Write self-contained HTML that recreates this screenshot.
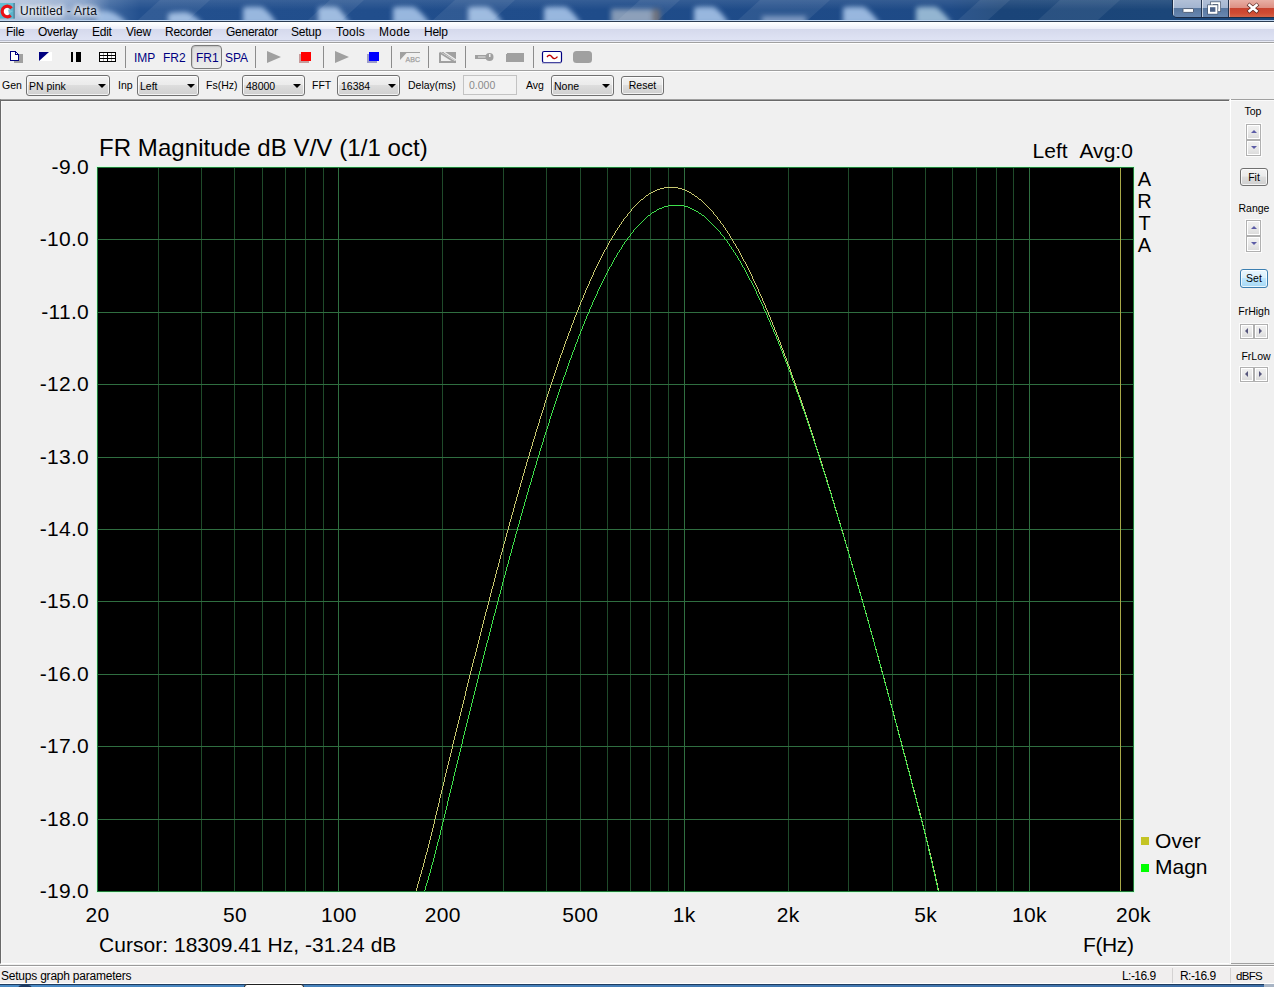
<!DOCTYPE html>
<html><head><meta charset="utf-8"><title>Untitled - Arta</title>
<style>
*{box-sizing:border-box;margin:0;padding:0}
html,body{width:1274px;height:987px;overflow:hidden;background:#f0f0f0}
body{position:relative;font-family:"Liberation Sans",sans-serif;font-size:12px;color:#000}
.abs{position:absolute}
.t{position:absolute;white-space:nowrap;line-height:1}
/* title bar */
#title{position:absolute;left:0;top:0;width:1274px;height:20px;overflow:hidden;
 background:linear-gradient(90deg,#b4c4dc 0,#a9bcd8 40px,#7f9cc6 85px,#3f68a0 110px,#23508e 140px,#1f4c8a 600px,#1e4a86 950px,#1a4478 1000px,#1b4679 1170px)}
#tl1{left:0;top:20px;width:1274px;height:1px;background:#c0d6f0}
#tl2{left:0;top:21px;width:1274px;height:1px;background:#2c3c52}
/* menu */
#menu{left:0;top:22px;width:1274px;height:22px;background:linear-gradient(180deg,#fff 0,#fbfcfe 2px,#eceef9 7px,#d5d9ec 7px,#dfe3f4 18px,#b9bdcd 18px,#b9bdcd 19px,#e8eaf4 19px,#e8eaf4 20px,#a0a0a0 20px,#a0a0a0 21px,#fff 21px)}
.m{position:absolute;top:25px;font-size:12px;line-height:14px;white-space:nowrap;letter-spacing:-0.25px}
/* toolbar */
.sep{position:absolute;top:46px;width:1px;height:22px;background:#8c8c8c}
.nv{position:absolute;top:52px;font-size:12px;line-height:12px;color:#000080;white-space:nowrap}
#tbl1{left:0;top:70px;width:1274px;height:1px;background:#a0a0a0}
#tbl2{left:0;top:71px;width:1274px;height:1px;background:#fff}
/* controls */
.lbl{position:absolute;top:79px;font-size:10.5px;line-height:12px;white-space:nowrap}
.combo{position:absolute;top:75px;height:21px;border:1px solid #707070;border-radius:3px;
 background:linear-gradient(180deg,#f2f2f2 0,#ebebeb 45%,#dddddd 50%,#cfcfcf 100%);box-shadow:inset 0 0 0 1px rgba(255,255,255,.75)}
.combo span{position:absolute;left:2px;top:4px;font-size:10.5px;line-height:12px;white-space:nowrap}
.combo i{position:absolute;right:3px;top:8px;width:0;height:0;border-left:4px solid transparent;border-right:4px solid transparent;border-top:4px solid #000}
.btn{position:absolute;border:1px solid #707070;border-radius:3px;background:linear-gradient(180deg,#f2f2f2 0,#ebebeb 45%,#dddddd 50%,#cfcfcf 100%);box-shadow:inset 0 0 0 1px rgba(255,255,255,.75);font-size:10.5px;text-align:center}
/* graph panel */
#gp{left:0;top:99px;width:1230px;height:865px;border-top:1px solid #a0a0a0;border-left:1px solid #696969;border-bottom:1px solid #fff;border-right:1px solid #f0f0f0;background:#f0f0f0;box-shadow:inset 1px 2px 0 #f7f7f7}
#gp:before{content:"";position:absolute;left:0;top:0;right:0;height:1px;background:#696969}
.plot{position:absolute;left:0;top:0}
.ax{position:absolute;font-size:21px;line-height:24px;white-space:nowrap;letter-spacing:.3px}
/* right panel */
.rl{position:absolute;font-size:10.5px;line-height:13px;white-space:nowrap;text-align:center;width:60px}
.spin{position:absolute;width:15px;background:#fff;box-shadow:0 0 0 1px #fbfbfb}
.sb{position:absolute;left:0;width:15px;height:16px;border:1px solid #b0b0b0;background:linear-gradient(180deg,#f0f0f0 0,#e9e9e9 50%,#dadada 100%);box-shadow:inset 0 0 0 1px #fff}
.hb{position:absolute;width:14px;height:15px;border:1px solid #b0b0b0;background:linear-gradient(180deg,#f0f0f0 0,#e9e9e9 50%,#dadada 100%);box-shadow:inset 0 0 0 1px #fff}
.au,.ad,.al,.ar{position:absolute;width:0;height:0}
.au{left:3.5px;top:4.5px;border-left:3px solid transparent;border-right:3px solid transparent;border-bottom:3.5px solid #5c5ca6}
.ad{left:3.5px;top:5px;border-left:3px solid transparent;border-right:3px solid transparent;border-top:3.5px solid #5c5ca6}
.al{left:3.5px;top:2.5px;border-top:3px solid transparent;border-bottom:3px solid transparent;border-right:3.5px solid #56567c}
.ar{left:4px;top:2.5px;border-top:3px solid transparent;border-bottom:3px solid transparent;border-left:3.5px solid #56567c}
/* status */
#sl1{left:0;top:965px;width:1274px;height:1px;background:#9a9a9a}
#sl2{left:0;top:966px;width:1274px;height:1px;background:#fff}
#status{left:0;top:967px;width:1274px;height:16px;background:#f0eeee}
.st{position:absolute;top:970px;font-size:12px;line-height:13px;white-space:nowrap;letter-spacing:-0.22px}
.hg{position:absolute;width:28px;height:15px;box-shadow:0 0 0 1px #fbfbfb}

</style></head>
<body>
<div id="title">
<svg class="abs" style="left:0;top:0" width="1274" height="20" viewBox="0 0 1274 20">
<defs><filter id="bl" x="-20%" y="-50%" width="140%" height="200%"><feGaussianBlur stdDeviation="2.6"/></filter>
<linearGradient id="gl" x1="0" y1="0" x2="0" y2="1"><stop offset="0" stop-color="#ffffff" stop-opacity=".10"/><stop offset="1" stop-color="#fff" stop-opacity="0"/></linearGradient></defs>
<g filter="url(#bl)" opacity=".88">
<path d="M96 24V13Q100 10 108 11Q118 13 128 24z" fill="#a9c6ea"/>
<path d="M168 24V14Q170 12 186 12Q194 14 203 24z" fill="#a9c6ea"/>
<path d="M243 24V8Q246 6 262 7Q270 12 277 24z" fill="#a9c6ea"/>
<path d="M318 24V8Q321 6 337 7Q343 12 350 24z" fill="#a9c6ea"/>
<path d="M393 24V8Q396 6 414 7Q422 12 430 24z" fill="#a9c6ea"/>
<path d="M468 24V8Q471 6 488 7Q496 12 503 24z" fill="#a9c6ea"/>
<path d="M544 24V8Q547 6 566 7Q574 12 581 24z" fill="#a9c6ea"/>
<path d="M611 24V9H660V24z" fill="#93a4bc"/>
<path d="M652 24V9H660V24z" fill="#6e6c70"/>
<path d="M694 24V8Q697 6 714 7Q722 12 729 24z" fill="#a9c6ea"/>
<path d="M762 24V16H806V24z" fill="#7f9cc4"/>
<path d="M843 24V8Q846 6 864 7Q872 12 880 24z" fill="#a9c6ea"/>
<path d="M916 24V8Q919 6 936 7Q944 12 952 24z" fill="#a4c4dc"/>
</g>
<rect x="0" y="0" width="1274" height="10" fill="url(#gl)"/>
<g fill="#fff" opacity=".07"><path d="M160 0h50l-22 20h-50z"/><path d="M330 0h34l-22 20h-34z"/><path d="M455 0h60l-22 20h-60z"/><path d="M640 0h40l-22 20h-40z"/><path d="M760 0h70l-22 20h-70z"/><path d="M980 0h30l-22 20h-30z"/><path d="M1060 0h60l-22 20h-60z"/></g>
</svg>
<!-- app icon -->
<svg class="abs" style="left:0;top:0" width="16" height="20" viewBox="0 0 16 20">
<rect x="0" y="3" width="14.600" height="15.600" fill="#5ab4cc"/>
<rect x="0" y="3" width="14.600" height="4" fill="#6cc4d8" opacity=".6"/>
<rect x="13.600" y="3" width="1" height="15.600" fill="#4a6c84"/>
<circle cx="5.800" cy="11.600" r="4" fill="#fff"/>
<path d="M8 9.500L13 11L9 14z" fill="#7cc4d8"/>
<path d="M11.600 8.200A5.300 5.300 0 1 0 10.800 15.600" fill="none" stroke="#ea1016" stroke-width="3.200"/>
</svg>
<div class="t" style="left:20px;top:4px;font-size:12px;line-height:14px;color:#0c1018;letter-spacing:.3px;text-shadow:0 0 5px #fff,0 0 5px #fff,0 0 8px #fff,0 0 8px rgba(255,255,255,.8)">Untitled - Arta</div>
<!-- caption buttons -->
<div class="abs" style="left:1172px;top:-2px;width:104px;height:20px;border:1px solid #1b2c46;border-radius:0 0 0 5px;overflow:hidden">
 <div class="abs" style="left:0;top:0;width:28px;height:19px;background:linear-gradient(180deg,#b4c2d8 0,#a2b4d0 9px,#58779f 9px,#6a89b2 100%);box-shadow:inset 1px -1px 0 rgba(255,255,255,.6)"></div>
 <div class="abs" style="left:28px;top:0;width:1px;height:19px;background:#22344f"></div>
 <div class="abs" style="left:29px;top:0;width:26px;height:19px;background:linear-gradient(180deg,#b4c2d8 0,#a2b4d0 9px,#58779f 9px,#6a89b2 100%);box-shadow:inset 1px -1px 0 rgba(255,255,255,.6)"></div>
 <div class="abs" style="left:55px;top:0;width:1px;height:19px;background:#22344f"></div>
 <div class="abs" style="left:56px;top:0;width:48px;height:19px;background:linear-gradient(180deg,#e9b3a9 0,#dd8f82 9px,#c8432f 9px,#cf4a32 14px,#d66a4c 100%);box-shadow:inset 1px -1px 0 rgba(255,255,255,.5)"></div>
</div>
<svg class="abs" style="left:1172px;top:0" width="102" height="20" viewBox="0 0 102 20">
<rect x="11" y="8.600" width="10.500" height="3.800" rx=".5" fill="#fff" stroke="#46566e" stroke-width=".9"/>
<rect x="39.800" y="3.200" width="7.400" height="7" fill="none" stroke="#46566e" stroke-width="3.400"/>
<rect x="39.800" y="3.200" width="7.400" height="7" fill="none" stroke="#fff" stroke-width="2"/>
<rect x="37" y="6.200" width="7.400" height="6.600" fill="#8da2c0" stroke="#46566e" stroke-width="3.400"/>
<rect x="37" y="6.200" width="7.400" height="6.600" fill="#4c6288" stroke="#fff" stroke-width="2"/>
<path d="M77.500 5.200L84.500 11M84.500 5.200L77.500 11" stroke="#5a2a24" stroke-width="4" stroke-linecap="square"/>
<path d="M77.500 5.200L84.500 11M84.500 5.200L77.500 11" stroke="#fff" stroke-width="2.600" stroke-linecap="square"/>
</svg>
</div>
<div class="abs" id="tl1"></div><div class="abs" id="tl2"></div>
<div class="abs" id="menu"></div>
<span class="m" style="left:6px">File</span>
<span class="m" style="left:38px">Overlay</span>
<span class="m" style="left:92px">Edit</span>
<span class="m" style="left:126px">View</span>
<span class="m" style="left:165px">Recorder</span>
<span class="m" style="left:226px">Generator</span>
<span class="m" style="left:291px">Setup</span>
<span class="m" style="left:336px;letter-spacing:.2px">Tools</span>
<span class="m" style="left:379px;letter-spacing:.3px">Mode</span>
<span class="m" style="left:424px">Help</span>
<svg class="abs" style="left:0;top:44px" width="640" height="26" viewBox="0 44 640 26" shape-rendering="crispEdges">
<!-- new doc -->
<rect x="14" y="54" width="9" height="9" fill="#a0a0a0"/>
<path d="M10 51h5l3 3v6h-8z" fill="#fff" stroke="#000080" stroke-width="1" transform="translate(.5 .5)"/>
<path d="M15 51v3h3" fill="none" stroke="#000080" stroke-width="1" transform="translate(.5 .5)"/>
<!-- triangle -->
<rect x="39" y="52" width="13" height="9" fill="#fff"/>
<path d="M39 52h10l-10 9z" fill="#000080" shape-rendering="geometricPrecision"/>
<!-- pause-ish -->
<rect x="71" y="52" width="2" height="10" fill="#000"/>
<rect x="76" y="52" width="5" height="10" fill="#000"/>
<!-- grid -->
<rect x="99" y="52" width="17" height="10" fill="#000"/>
<path d="M100 53h7v2h-7zM108 53h7v2h-7zM100 56h7v2h-7zM108 56h7v2h-7zM100 59h7v2h-7zM108 59h7v2h-7z" fill="#fff"/>
<path d="M103 53h1v8h-1zM111 53h1v8h-1z" fill="#000" opacity=".35"/>
<path d="M100 55h15v1h-15zM100 58h15v1h-15z" fill="#000"/>
<!-- play 1 -->
<path d="M267 51l14 6l-14 6z" fill="#a0a0a0" shape-rendering="geometricPrecision"/>
<!-- red stop -->
<rect x="299" y="54" width="10" height="9" fill="#c89c9c"/>
<rect x="301" y="52" width="10" height="9" fill="#ff0000"/>
<!-- play 2 -->
<path d="M335 51l14 6l-14 6z" fill="#a0a0a0" shape-rendering="geometricPrecision"/>
<!-- blue stop -->
<rect x="367" y="54" width="10" height="9" fill="#9c9ccc"/>
<rect x="369" y="52" width="10" height="9" fill="#0000ff"/>
<!-- ABC -->
<path d="M400 52h20v1h-13.500l-6.500 7z" fill="#a0a0a0" shape-rendering="geometricPrecision"/>
<text x="405.500" y="62" font-family="Liberation Sans,sans-serif" font-size="8" fill="#a0a0a0" stroke="#a0a0a0" stroke-width=".25" shape-rendering="geometricPrecision" textLength="14.500" lengthAdjust="spacingAndGlyphs">ABC</text>
<!-- ruler -->
<g shape-rendering="geometricPrecision"><path d="M439 53v10h17v-2h-15v-8z" fill="#a0a0a0"/><path d="M441 52h15v9z" fill="#a0a0a0"/><path d="M439.500 52.500l16 10" stroke="#a0a0a0" stroke-width="1.800"/><path d="M444 52l12 8" stroke="#f0f0f0" stroke-width="1.300"/></g>
<!-- key -->
<g shape-rendering="geometricPrecision"><rect x="475" y="55" width="13" height="4" fill="#a0a0a0"/><rect x="478" y="56.500" width="8" height="1" fill="#e6e6e6"/><circle cx="489.500" cy="57" r="4" fill="#a0a0a0"/><rect x="489" y="54" width="1.500" height="3" fill="#f0f0f0"/></g>
<!-- gray rect -->
<path d="M506 54l1-1h16l1 1v8h-18z" fill="#a0a0a0"/>
<!-- scope -->
<g shape-rendering="geometricPrecision"><rect x="542.500" y="51.500" width="19" height="11" rx="1.500" fill="#fff" stroke="#000080" stroke-width="1.200"/><path d="M542 63h19" stroke="#8c8cc0" stroke-width="1"/><path d="M547 57q2.500-3.500 5 0t5.500-.3" fill="none" stroke="#c00000" stroke-width="1.300"/></g>
<!-- gray rounded -->
<rect x="573" y="51" width="19" height="12" rx="3.500" fill="#a0a0a0" shape-rendering="geometricPrecision"/>
</svg>
<div class="sep" style="left:125px"></div><div class="sep" style="left:255px"></div><div class="sep" style="left:323px"></div><div class="sep" style="left:391px"></div><div class="sep" style="left:428px"></div><div class="sep" style="left:465px"></div><div class="sep" style="left:533px"></div>
<div class="abs" style="left:191px;top:45px;width:31px;height:24px;border:1px solid #7a7a7a;border-radius:4px;background:linear-gradient(180deg,#dcdcdc 0,#e6e6e6 50%,#ececec 100%);box-shadow:inset 1px 1px 1px rgba(0,0,0,.12)"></div>
<span class="nv" style="left:134px">IMP</span>
<span class="nv" style="left:163px">FR2</span>
<span class="nv" style="left:196px">FR1</span>
<span class="nv" style="left:225px">SPA</span>

<div class="abs" id="tbl1"></div><div class="abs" id="tbl2"></div>
<span class="lbl" style="left:2px">Gen</span>
<div class="combo" style="left:26px;width:84px"><span>PN pink</span><i></i></div>
<span class="lbl" style="left:118px">Inp</span>
<div class="combo" style="left:137px;width:62px"><span>Left</span><i></i></div>
<span class="lbl" style="left:206px">Fs(Hz)</span>
<div class="combo" style="left:242px;width:63px"><span style="left:3px">48000</span><i></i></div>
<span class="lbl" style="left:312px">FFT</span>
<div class="combo" style="left:337px;width:63px"><span style="left:3px">16384</span><i></i></div>
<span class="lbl" style="left:408px">Delay(ms)</span>
<div class="abs" style="left:463px;top:75px;width:54px;height:20px;border:1px solid #c3c3c3;background:#f2f2f2"><span class="t" style="left:5px;top:3px;font-size:10.5px;line-height:12px;color:#8a8a8a">0.000</span></div>
<span class="lbl" style="left:526px">Avg</span>
<div class="combo" style="left:551px;width:63px"><span>None</span><i></i></div>
<div class="btn" style="left:621px;top:76px;width:43px;height:19px;line-height:17px">Reset</div>

<div class="abs" id="gp"></div>
<svg class="plot" width="1274" height="987" viewBox="0 0 1274 987" shape-rendering="crispEdges">
<rect x="97" y="167" width="1037" height="725" fill="#000"/>
<path d="M158 167v724h1v-724zM201 167v724h1v-724zM234 167v724h1v-724zM262 167v724h1v-724zM285 167v724h1v-724zM305 167v724h1v-724zM323 167v724h1v-724zM442 167v724h1v-724zM503 167v724h1v-724zM546 167v724h1v-724zM580 167v724h1v-724zM607 167v724h1v-724zM630 167v724h1v-724zM650 167v724h1v-724zM668 167v724h1v-724zM788 167v724h1v-724zM848 167v724h1v-724zM892 167v724h1v-724zM925 167v724h1v-724zM952 167v724h1v-724zM976 167v724h1v-724zM996 167v724h1v-724zM1013 167v724h1v-724z" fill="#1f4a2a"/>
<path d="M338 167v724h1v-724zM684 167v724h1v-724zM1029 167v724h1v-724z" fill="#2f6e40"/>
<path d="M97 239h1036v1h-1036zM97 312h1036v1h-1036zM97 384h1036v1h-1036zM97 457h1036v1h-1036zM97 529h1036v1h-1036zM97 601h1036v1h-1036zM97 674h1036v1h-1036zM97 746h1036v1h-1036zM97 819h1036v1h-1036z" fill="#2f6e40"/>
<rect x="1120" y="168" width="1" height="723" fill="#a8a848"/>
<path d="M416 888h1v3h-1zM417 884h1v4h-1zM418 881h1v3h-1zM419 877h1v4h-1zM420 874h1v3h-1zM421 870h1v4h-1zM422 867h1v3h-1zM423 863h1v4h-1zM424 859h1v4h-1zM425 855h1v4h-1zM426 852h1v3h-1zM427 848h1v4h-1zM428 844h1v4h-1zM429 840h1v4h-1zM430 836h1v4h-1zM431 832h1v4h-1zM432 828h1v4h-1zM433 824h1v4h-1zM434 819h1v5h-1zM435 815h1v4h-1zM436 811h1v4h-1zM437 807h1v4h-1zM438 803h1v4h-1zM439 798h1v5h-1zM440 794h1v4h-1zM441 790h1v4h-1zM442 786h1v4h-1zM443 782h1v4h-1zM444 777h1v5h-1zM445 773h1v4h-1zM446 769h1v4h-1zM447 765h1v4h-1zM448 761h1v4h-1zM449 757h1v4h-1zM450 753h1v4h-1zM451 749h1v4h-1zM452 744h1v5h-1zM453 740h1v4h-1zM454 736h1v4h-1zM455 732h1v4h-1zM456 728h1v4h-1zM457 724h1v4h-1zM458 720h1v4h-1zM459 716h1v4h-1zM460 712h1v4h-1zM461 708h1v4h-1zM462 704h1v4h-1zM463 700h1v4h-1zM464 696h1v4h-1zM465 691h1v5h-1zM466 687h1v4h-1zM467 683h1v4h-1zM468 679h1v4h-1zM469 675h1v4h-1zM470 671h1v4h-1zM471 667h1v4h-1zM472 663h1v4h-1zM473 659h1v4h-1zM474 656h1v3h-1zM475 652h1v4h-1zM476 648h1v4h-1zM477 644h1v4h-1zM478 640h1v4h-1zM479 636h1v4h-1zM480 632h1v4h-1zM481 628h1v4h-1zM482 624h1v4h-1zM483 620h1v4h-1zM484 616h1v4h-1zM485 612h1v4h-1zM486 609h1v3h-1zM487 605h1v4h-1zM488 601h1v4h-1zM489 597h1v4h-1zM490 593h1v4h-1zM491 589h1v4h-1zM492 586h1v3h-1zM493 582h1v4h-1zM494 578h1v4h-1zM495 574h1v4h-1zM496 570h1v4h-1zM497 567h1v3h-1zM498 563h1v4h-1zM499 559h1v4h-1zM500 555h1v4h-1zM501 552h1v3h-1zM502 548h1v4h-1zM503 544h1v4h-1zM504 541h1v3h-1zM505 537h1v4h-1zM506 533h1v4h-1zM507 530h1v3h-1zM508 526h1v4h-1zM509 522h1v4h-1zM510 519h1v3h-1zM511 515h1v4h-1zM512 512h1v3h-1zM513 508h1v4h-1zM514 504h1v4h-1zM515 501h1v3h-1zM516 497h1v4h-1zM517 494h1v3h-1zM518 490h1v4h-1zM519 487h1v3h-1zM520 483h1v4h-1zM521 480h1v3h-1zM522 476h1v4h-1zM523 473h1v3h-1zM524 469h1v4h-1zM525 466h1v3h-1zM526 462h1v4h-1zM527 459h1v3h-1zM528 456h1v3h-1zM529 452h1v4h-1zM530 449h1v3h-1zM531 446h1v3h-1zM532 442h1v4h-1zM533 439h1v3h-1zM534 436h1v3h-1zM535 432h1v4h-1zM536 429h1v3h-1zM537 426h1v3h-1zM538 423h1v3h-1zM539 419h1v4h-1zM540 416h1v3h-1zM541 413h1v3h-1zM542 410h1v3h-1zM543 407h1v3h-1zM544 403h1v4h-1zM545 400h1v3h-1zM546 397h1v3h-1zM547 394h1v3h-1zM548 391h1v3h-1zM549 388h1v3h-1zM550 385h1v3h-1zM551 382h1v3h-1zM552 379h1v3h-1zM553 376h1v3h-1zM554 373h1v3h-1zM555 370h1v3h-1zM556 367h1v3h-1zM557 364h1v3h-1zM558 361h1v3h-1zM559 358h1v3h-1zM560 355h1v3h-1zM561 353h1v2h-1zM562 350h1v3h-1zM563 347h1v3h-1zM564 344h1v3h-1zM565 341h1v3h-1zM566 339h1v2h-1zM567 336h1v3h-1zM568 333h1v3h-1zM569 331h1v2h-1zM570 328h1v3h-1zM571 325h1v3h-1zM572 323h1v2h-1zM573 320h1v3h-1zM574 317h1v3h-1zM575 315h1v2h-1zM576 312h1v3h-1zM577 310h1v2h-1zM578 307h1v3h-1zM579 305h1v2h-1zM580 302h1v3h-1zM581 300h1v2h-1zM582 298h1v2h-1zM583 295h1v3h-1zM584 293h1v2h-1zM585 290h1v3h-1zM586 288h1v2h-1zM587 286h1v2h-1zM588 284h1v2h-1zM589 281h1v3h-1zM590 279h1v2h-1zM591 277h1v2h-1zM592 275h1v2h-1zM593 272h1v3h-1zM594 270h1v2h-1zM595 268h1v2h-1zM596 266h1v2h-1zM597 264h1v2h-1zM598 262h1v2h-1zM599 260h1v2h-1zM600 258h1v2h-1zM601 256h1v2h-1zM602 254h1v2h-1zM603 252h1v2h-1zM604 250h1v2h-1zM605 249h1v1h-1zM606 247h1v2h-1zM607 245h1v2h-1zM608 243h1v2h-1zM609 241h1v2h-1zM610 240h1v1h-1zM611 238h1v2h-1zM612 236h1v2h-1zM613 235h1v1h-1zM614 233h1v2h-1zM615 231h1v2h-1zM616 230h1v1h-1zM617 228h1v2h-1zM618 227h1v1h-1zM619 225h1v2h-1zM620 224h1v1h-1zM621 222h1v2h-1zM622 221h1v1h-1zM623 219h1v2h-1zM624 218h1v1h-1zM625 217h1v1h-1zM626 216h1v1h-1zM627 214h1v2h-1zM628 213h1v1h-1zM629 212h1v1h-1zM630 211h1v1h-1zM631 209h1v2h-1zM632 208h1v1h-1zM633 207h1v1h-1zM634 206h1v1h-1zM635 205h1v1h-1zM636 204h1v1h-1zM637 203h1v1h-1zM638 202h1v1h-1zM639 201h1v1h-1zM640 200h1v1h-1zM641 199h1v1h-1zM642 199h1v1h-1zM643 198h1v1h-1zM644 197h1v1h-1zM645 196h1v1h-1zM646 195h1v1h-1zM647 195h1v1h-1zM648 194h1v1h-1zM649 193h1v1h-1zM650 193h1v1h-1zM651 192h1v1h-1zM652 192h1v1h-1zM653 191h1v1h-1zM654 191h1v1h-1zM655 190h1v1h-1zM656 190h1v1h-1zM657 189h1v1h-1zM658 189h1v1h-1zM659 189h1v1h-1zM660 188h1v1h-1zM661 188h1v1h-1zM662 188h1v1h-1zM663 188h1v1h-1zM664 187h1v1h-1zM665 187h1v1h-1zM666 187h1v1h-1zM667 187h1v1h-1zM668 187h1v1h-1zM669 187h1v1h-1zM670 187h1v1h-1zM671 187h1v1h-1zM672 187h1v1h-1zM673 187h1v1h-1zM674 187h1v1h-1zM675 187h1v1h-1zM676 187h1v1h-1zM677 187h1v1h-1zM678 188h1v1h-1zM679 188h1v1h-1zM680 188h1v1h-1zM681 188h1v1h-1zM682 189h1v1h-1zM683 189h1v1h-1zM684 189h1v1h-1zM685 190h1v1h-1zM686 190h1v1h-1zM687 191h1v1h-1zM688 191h1v1h-1zM689 192h1v1h-1zM690 192h1v1h-1zM691 193h1v1h-1zM692 194h1v1h-1zM693 194h1v1h-1zM694 195h1v1h-1zM695 196h1v1h-1zM696 196h1v1h-1zM697 197h1v1h-1zM698 198h1v1h-1zM699 199h1v1h-1zM700 199h1v1h-1zM701 200h1v1h-1zM702 201h1v1h-1zM703 202h1v1h-1zM704 203h1v1h-1zM705 204h1v1h-1zM706 205h1v1h-1zM707 206h1v1h-1zM708 207h1v1h-1zM709 208h1v1h-1zM710 209h1v1h-1zM711 210h1v1h-1zM712 211h1v1h-1zM713 212h1v2h-1zM714 214h1v1h-1zM715 215h1v1h-1zM716 216h1v1h-1zM717 217h1v2h-1zM718 219h1v1h-1zM719 220h1v1h-1zM720 221h1v2h-1zM721 223h1v1h-1zM722 224h1v1h-1zM723 225h1v2h-1zM724 227h1v1h-1zM725 228h1v2h-1zM726 230h1v1h-1zM727 231h1v2h-1zM728 233h1v1h-1zM729 234h1v2h-1zM730 236h1v2h-1zM731 238h1v1h-1zM732 239h1v2h-1zM733 241h1v2h-1zM734 243h1v1h-1zM735 244h1v2h-1zM736 246h1v2h-1zM737 248h1v1h-1zM738 249h1v2h-1zM739 251h1v2h-1zM740 253h1v2h-1zM741 255h1v2h-1zM742 257h1v2h-1zM743 259h1v2h-1zM744 261h1v1h-1zM745 262h1v2h-1zM746 264h1v2h-1zM747 266h1v2h-1zM748 268h1v2h-1zM749 270h1v2h-1zM750 272h1v2h-1zM751 274h1v2h-1zM752 276h1v3h-1zM753 279h1v2h-1zM754 281h1v2h-1zM755 283h1v2h-1zM756 285h1v2h-1zM757 287h1v2h-1zM758 289h1v3h-1zM759 292h1v2h-1zM760 294h1v2h-1zM761 296h1v2h-1zM762 298h1v3h-1zM763 301h1v2h-1zM764 303h1v2h-1zM765 305h1v3h-1zM766 308h1v2h-1zM767 310h1v2h-1zM768 312h1v3h-1zM769 315h1v2h-1zM770 317h1v3h-1zM771 320h1v2h-1zM772 322h1v3h-1zM773 325h1v2h-1zM774 327h1v3h-1zM775 330h1v2h-1zM776 332h1v3h-1zM777 335h1v2h-1zM778 337h1v3h-1zM779 340h1v2h-1zM780 342h1v3h-1zM781 345h1v3h-1zM782 348h1v2h-1zM783 350h1v3h-1zM784 353h1v3h-1zM785 356h1v2h-1zM786 358h1v3h-1zM787 361h1v3h-1zM788 364h1v2h-1zM789 366h1v3h-1zM790 369h1v3h-1zM791 372h1v3h-1zM792 375h1v3h-1zM793 378h1v2h-1zM794 380h1v3h-1zM795 383h1v3h-1zM796 386h1v3h-1zM797 389h1v3h-1zM798 392h1v3h-1zM799 395h1v2h-1zM800 397h1v3h-1zM801 400h1v3h-1zM802 403h1v3h-1zM803 406h1v3h-1zM804 409h1v3h-1zM805 412h1v3h-1zM806 415h1v3h-1zM807 418h1v3h-1zM808 421h1v3h-1zM809 424h1v3h-1zM810 427h1v3h-1zM811 430h1v3h-1zM812 433h1v3h-1zM813 436h1v3h-1zM814 439h1v4h-1zM815 443h1v3h-1zM816 446h1v3h-1zM817 449h1v3h-1zM818 452h1v3h-1zM819 455h1v3h-1zM820 458h1v3h-1zM821 461h1v3h-1zM822 464h1v4h-1zM823 468h1v3h-1zM824 471h1v3h-1zM825 474h1v3h-1zM826 477h1v3h-1zM827 480h1v4h-1zM828 484h1v3h-1zM829 487h1v3h-1zM830 490h1v3h-1zM831 493h1v4h-1zM832 497h1v3h-1zM833 500h1v3h-1zM834 503h1v4h-1zM835 507h1v3h-1zM836 510h1v3h-1zM837 513h1v4h-1zM838 517h1v3h-1zM839 520h1v3h-1zM840 523h1v4h-1zM841 527h1v3h-1zM842 530h1v3h-1zM843 533h1v4h-1zM844 537h1v3h-1zM845 540h1v4h-1zM846 544h1v3h-1zM847 547h1v3h-1zM848 550h1v4h-1zM849 554h1v3h-1zM850 557h1v4h-1zM851 561h1v3h-1zM852 564h1v4h-1zM853 568h1v3h-1zM854 571h1v4h-1zM855 575h1v3h-1zM856 578h1v4h-1zM857 582h1v3h-1zM858 585h1v4h-1zM859 589h1v3h-1zM860 592h1v4h-1zM861 596h1v3h-1zM862 599h1v4h-1zM863 603h1v3h-1zM864 606h1v4h-1zM865 610h1v3h-1zM866 613h1v4h-1zM867 617h1v3h-1zM868 620h1v4h-1zM869 624h1v4h-1zM870 628h1v3h-1zM871 631h1v4h-1zM872 635h1v3h-1zM873 638h1v4h-1zM874 642h1v4h-1zM875 646h1v3h-1zM876 649h1v4h-1zM877 653h1v3h-1zM878 656h1v4h-1zM879 660h1v4h-1zM880 664h1v3h-1zM881 667h1v4h-1zM882 671h1v4h-1zM883 675h1v3h-1zM884 678h1v4h-1zM885 682h1v4h-1zM886 686h1v3h-1zM887 689h1v4h-1zM888 693h1v4h-1zM889 697h1v3h-1zM890 700h1v4h-1zM891 704h1v4h-1zM892 708h1v3h-1zM893 711h1v4h-1zM894 715h1v4h-1zM895 719h1v4h-1zM896 723h1v3h-1zM897 726h1v4h-1zM898 730h1v4h-1zM899 734h1v4h-1zM900 738h1v3h-1zM901 741h1v4h-1zM902 745h1v4h-1zM903 749h1v4h-1zM904 753h1v3h-1zM905 756h1v4h-1zM906 760h1v4h-1zM907 764h1v4h-1zM908 768h1v3h-1zM909 771h1v4h-1zM910 775h1v4h-1zM911 779h1v4h-1zM912 783h1v4h-1zM913 787h1v3h-1zM914 790h1v4h-1zM915 794h1v4h-1zM916 798h1v4h-1zM917 802h1v4h-1zM918 806h1v3h-1zM919 809h1v4h-1zM920 813h1v4h-1zM921 817h1v4h-1zM922 821h1v4h-1zM923 825h1v4h-1zM924 829h1v4h-1zM925 833h1v4h-1zM926 837h1v4h-1zM927 841h1v4h-1zM928 845h1v4h-1zM929 849h1v4h-1zM930 853h1v4h-1zM931 857h1v4h-1zM932 861h1v5h-1zM933 866h1v4h-1zM934 870h1v4h-1zM935 874h1v5h-1zM936 879h1v4h-1zM937 883h1v5h-1zM938 888h1v3h-1z" fill="#c8c870"/>
<path d="M424 890h1v1h-1zM425 886h1v4h-1zM426 883h1v3h-1zM427 880h1v3h-1zM428 876h1v4h-1zM429 873h1v3h-1zM430 869h1v4h-1zM431 865h1v4h-1zM432 862h1v3h-1zM433 858h1v4h-1zM434 854h1v4h-1zM435 850h1v4h-1zM436 846h1v4h-1zM437 842h1v4h-1zM438 839h1v3h-1zM439 835h1v4h-1zM440 830h1v5h-1zM441 826h1v4h-1zM442 822h1v4h-1zM443 818h1v4h-1zM444 814h1v4h-1zM445 810h1v4h-1zM446 806h1v4h-1zM447 801h1v5h-1zM448 797h1v4h-1zM449 793h1v4h-1zM450 789h1v4h-1zM451 785h1v4h-1zM452 781h1v4h-1zM453 776h1v5h-1zM454 772h1v4h-1zM455 768h1v4h-1zM456 764h1v4h-1zM457 760h1v4h-1zM458 756h1v4h-1zM459 752h1v4h-1zM460 748h1v4h-1zM461 744h1v4h-1zM462 739h1v5h-1zM463 735h1v4h-1zM464 731h1v4h-1zM465 727h1v4h-1zM466 723h1v4h-1zM467 719h1v4h-1zM468 715h1v4h-1zM469 711h1v4h-1zM470 707h1v4h-1zM471 703h1v4h-1zM472 699h1v4h-1zM473 695h1v4h-1zM474 691h1v4h-1zM475 687h1v4h-1zM476 683h1v4h-1zM477 679h1v4h-1zM478 675h1v4h-1zM479 671h1v4h-1zM480 667h1v4h-1zM481 663h1v4h-1zM482 659h1v4h-1zM483 655h1v4h-1zM484 651h1v4h-1zM485 647h1v4h-1zM486 643h1v4h-1zM487 640h1v3h-1zM488 636h1v4h-1zM489 632h1v4h-1zM490 628h1v4h-1zM491 624h1v4h-1zM492 620h1v4h-1zM493 616h1v4h-1zM494 613h1v3h-1zM495 609h1v4h-1zM496 605h1v4h-1zM497 601h1v4h-1zM498 597h1v4h-1zM499 594h1v3h-1zM500 590h1v4h-1zM501 586h1v4h-1zM502 582h1v4h-1zM503 578h1v4h-1zM504 575h1v3h-1zM505 571h1v4h-1zM506 567h1v4h-1zM507 564h1v3h-1zM508 560h1v4h-1zM509 556h1v4h-1zM510 553h1v3h-1zM511 549h1v4h-1zM512 545h1v4h-1zM513 542h1v3h-1zM514 538h1v4h-1zM515 534h1v4h-1zM516 531h1v3h-1zM517 527h1v4h-1zM518 524h1v3h-1zM519 520h1v4h-1zM520 516h1v4h-1zM521 513h1v3h-1zM522 509h1v4h-1zM523 506h1v3h-1zM524 502h1v4h-1zM525 499h1v3h-1zM526 495h1v4h-1zM527 492h1v3h-1zM528 488h1v4h-1zM529 485h1v3h-1zM530 482h1v3h-1zM531 478h1v4h-1zM532 475h1v3h-1zM533 471h1v4h-1zM534 468h1v3h-1zM535 465h1v3h-1zM536 461h1v4h-1zM537 458h1v3h-1zM538 455h1v3h-1zM539 451h1v4h-1zM540 448h1v3h-1zM541 445h1v3h-1zM542 442h1v3h-1zM543 438h1v4h-1zM544 435h1v3h-1zM545 432h1v3h-1zM546 429h1v3h-1zM547 426h1v3h-1zM548 423h1v3h-1zM549 419h1v4h-1zM550 416h1v3h-1zM551 413h1v3h-1zM552 410h1v3h-1zM553 407h1v3h-1zM554 404h1v3h-1zM555 401h1v3h-1zM556 398h1v3h-1zM557 395h1v3h-1zM558 392h1v3h-1zM559 389h1v3h-1zM560 386h1v3h-1zM561 383h1v3h-1zM562 380h1v3h-1zM563 377h1v3h-1zM564 375h1v2h-1zM565 372h1v3h-1zM566 369h1v3h-1zM567 366h1v3h-1zM568 363h1v3h-1zM569 360h1v3h-1zM570 358h1v2h-1zM571 355h1v3h-1zM572 352h1v3h-1zM573 350h1v2h-1zM574 347h1v3h-1zM575 344h1v3h-1zM576 342h1v2h-1zM577 339h1v3h-1zM578 336h1v3h-1zM579 334h1v2h-1zM580 331h1v3h-1zM581 329h1v2h-1zM582 326h1v3h-1zM583 324h1v2h-1zM584 321h1v3h-1zM585 319h1v2h-1zM586 316h1v3h-1zM587 314h1v2h-1zM588 312h1v2h-1zM589 309h1v3h-1zM590 307h1v2h-1zM591 305h1v2h-1zM592 302h1v3h-1zM593 300h1v2h-1zM594 298h1v2h-1zM595 296h1v2h-1zM596 294h1v2h-1zM597 291h1v3h-1zM598 289h1v2h-1zM599 287h1v2h-1zM600 285h1v2h-1zM601 283h1v2h-1zM602 281h1v2h-1zM603 279h1v2h-1zM604 277h1v2h-1zM605 275h1v2h-1zM606 273h1v2h-1zM607 271h1v2h-1zM608 269h1v2h-1zM609 267h1v2h-1zM610 266h1v1h-1zM611 264h1v2h-1zM612 262h1v2h-1zM613 260h1v2h-1zM614 258h1v2h-1zM615 257h1v1h-1zM616 255h1v2h-1zM617 253h1v2h-1zM618 252h1v1h-1zM619 250h1v2h-1zM620 249h1v1h-1zM621 247h1v2h-1zM622 245h1v2h-1zM623 244h1v1h-1zM624 242h1v2h-1zM625 241h1v1h-1zM626 240h1v1h-1zM627 238h1v2h-1zM628 237h1v1h-1zM629 236h1v1h-1zM630 234h1v2h-1zM631 233h1v1h-1zM632 232h1v1h-1zM633 230h1v2h-1zM634 229h1v1h-1zM635 228h1v1h-1zM636 227h1v1h-1zM637 226h1v1h-1zM638 225h1v1h-1zM639 224h1v1h-1zM640 223h1v1h-1zM641 222h1v1h-1zM642 221h1v1h-1zM643 220h1v1h-1zM644 219h1v1h-1zM645 218h1v1h-1zM646 217h1v1h-1zM647 216h1v1h-1zM648 215h1v1h-1zM649 215h1v1h-1zM650 214h1v1h-1zM651 213h1v1h-1zM652 212h1v1h-1zM653 212h1v1h-1zM654 211h1v1h-1zM655 211h1v1h-1zM656 210h1v1h-1zM657 209h1v1h-1zM658 209h1v1h-1zM659 208h1v1h-1zM660 208h1v1h-1zM661 208h1v1h-1zM662 207h1v1h-1zM663 207h1v1h-1zM664 206h1v1h-1zM665 206h1v1h-1zM666 206h1v1h-1zM667 206h1v1h-1zM668 205h1v1h-1zM669 205h1v1h-1zM670 205h1v1h-1zM671 205h1v1h-1zM672 205h1v1h-1zM673 205h1v1h-1zM674 205h1v1h-1zM675 205h1v1h-1zM676 205h1v1h-1zM677 205h1v1h-1zM678 205h1v1h-1zM679 205h1v1h-1zM680 205h1v1h-1zM681 205h1v1h-1zM682 205h1v1h-1zM683 205h1v1h-1zM684 206h1v1h-1zM685 206h1v1h-1zM686 206h1v1h-1zM687 206h1v1h-1zM688 207h1v1h-1zM689 207h1v1h-1zM690 208h1v1h-1zM691 208h1v1h-1zM692 209h1v1h-1zM693 209h1v1h-1zM694 210h1v1h-1zM695 210h1v1h-1zM696 211h1v1h-1zM697 211h1v1h-1zM698 212h1v1h-1zM699 213h1v1h-1zM700 213h1v1h-1zM701 214h1v1h-1zM702 215h1v1h-1zM703 215h1v1h-1zM704 216h1v1h-1zM705 217h1v1h-1zM706 218h1v1h-1zM707 219h1v1h-1zM708 220h1v1h-1zM709 221h1v1h-1zM710 222h1v1h-1zM711 223h1v1h-1zM712 224h1v1h-1zM713 225h1v1h-1zM714 226h1v1h-1zM715 227h1v1h-1zM716 228h1v1h-1zM717 229h1v1h-1zM718 230h1v1h-1zM719 231h1v1h-1zM720 232h1v2h-1zM721 234h1v1h-1zM722 235h1v1h-1zM723 236h1v1h-1zM724 237h1v2h-1zM725 239h1v1h-1zM726 240h1v1h-1zM727 241h1v2h-1zM728 243h1v1h-1zM729 244h1v2h-1zM730 246h1v1h-1zM731 247h1v2h-1zM732 249h1v1h-1zM733 250h1v2h-1zM734 252h1v1h-1zM735 253h1v2h-1zM736 255h1v1h-1zM737 256h1v2h-1zM738 258h1v2h-1zM739 260h1v1h-1zM740 261h1v2h-1zM741 263h1v2h-1zM742 265h1v2h-1zM743 267h1v1h-1zM744 268h1v2h-1zM745 270h1v2h-1zM746 272h1v2h-1zM747 274h1v2h-1zM748 276h1v2h-1zM749 278h1v2h-1zM750 280h1v1h-1zM751 281h1v2h-1zM752 283h1v2h-1zM753 285h1v2h-1zM754 287h1v2h-1zM755 289h1v2h-1zM756 291h1v3h-1zM757 294h1v2h-1zM758 296h1v2h-1zM759 298h1v2h-1zM760 300h1v2h-1zM761 302h1v2h-1zM762 304h1v2h-1zM763 306h1v3h-1zM764 309h1v2h-1zM765 311h1v2h-1zM766 313h1v2h-1zM767 315h1v3h-1zM768 318h1v2h-1zM769 320h1v2h-1zM770 322h1v3h-1zM771 325h1v2h-1zM772 327h1v2h-1zM773 329h1v3h-1zM774 332h1v2h-1zM775 334h1v2h-1zM776 336h1v3h-1zM777 339h1v2h-1zM778 341h1v3h-1zM779 344h1v2h-1zM780 346h1v3h-1zM781 349h1v2h-1zM782 351h1v3h-1zM783 354h1v3h-1zM784 357h1v2h-1zM785 359h1v3h-1zM786 362h1v2h-1zM787 364h1v3h-1zM788 367h1v3h-1zM789 370h1v2h-1zM790 372h1v3h-1zM791 375h1v3h-1zM792 378h1v3h-1zM793 381h1v2h-1zM794 383h1v3h-1zM795 386h1v3h-1zM796 389h1v3h-1zM797 392h1v2h-1zM798 394h1v3h-1zM799 397h1v3h-1zM800 400h1v3h-1zM801 403h1v3h-1zM802 406h1v3h-1zM803 409h1v2h-1zM804 411h1v3h-1zM805 414h1v3h-1zM806 417h1v3h-1zM807 420h1v3h-1zM808 423h1v3h-1zM809 426h1v3h-1zM810 429h1v3h-1zM811 432h1v3h-1zM812 435h1v3h-1zM813 438h1v3h-1zM814 441h1v3h-1zM815 444h1v3h-1zM816 447h1v3h-1zM817 450h1v3h-1zM818 453h1v3h-1zM819 456h1v4h-1zM820 460h1v3h-1zM821 463h1v3h-1zM822 466h1v3h-1zM823 469h1v3h-1zM824 472h1v3h-1zM825 475h1v3h-1zM826 478h1v4h-1zM827 482h1v3h-1zM828 485h1v3h-1zM829 488h1v3h-1zM830 491h1v3h-1zM831 494h1v4h-1zM832 498h1v3h-1zM833 501h1v3h-1zM834 504h1v4h-1zM835 508h1v3h-1zM836 511h1v3h-1zM837 514h1v3h-1zM838 517h1v4h-1zM839 521h1v3h-1zM840 524h1v3h-1zM841 527h1v4h-1zM842 531h1v3h-1zM843 534h1v3h-1zM844 537h1v4h-1zM845 541h1v3h-1zM846 544h1v4h-1zM847 548h1v3h-1zM848 551h1v3h-1zM849 554h1v4h-1zM850 558h1v3h-1zM851 561h1v4h-1zM852 565h1v3h-1zM853 568h1v4h-1zM854 572h1v3h-1zM855 575h1v4h-1zM856 579h1v3h-1zM857 582h1v4h-1zM858 586h1v3h-1zM859 589h1v4h-1zM860 593h1v3h-1zM861 596h1v4h-1zM862 600h1v3h-1zM863 603h1v4h-1zM864 607h1v3h-1zM865 610h1v4h-1zM866 614h1v3h-1zM867 617h1v4h-1zM868 621h1v3h-1zM869 624h1v4h-1zM870 628h1v4h-1zM871 632h1v3h-1zM872 635h1v4h-1zM873 639h1v3h-1zM874 642h1v4h-1zM875 646h1v4h-1zM876 650h1v3h-1zM877 653h1v4h-1zM878 657h1v4h-1zM879 661h1v3h-1zM880 664h1v4h-1zM881 668h1v4h-1zM882 672h1v3h-1zM883 675h1v4h-1zM884 679h1v4h-1zM885 683h1v3h-1zM886 686h1v4h-1zM887 690h1v4h-1zM888 694h1v3h-1zM889 697h1v4h-1zM890 701h1v4h-1zM891 705h1v3h-1zM892 708h1v4h-1zM893 712h1v4h-1zM894 716h1v4h-1zM895 720h1v3h-1zM896 723h1v4h-1zM897 727h1v4h-1zM898 731h1v4h-1zM899 735h1v3h-1zM900 738h1v4h-1zM901 742h1v4h-1zM902 746h1v4h-1zM903 750h1v4h-1zM904 754h1v3h-1zM905 757h1v4h-1zM906 761h1v4h-1zM907 765h1v4h-1zM908 769h1v3h-1zM909 772h1v4h-1zM910 776h1v4h-1zM911 780h1v4h-1zM912 784h1v4h-1zM913 788h1v4h-1zM914 792h1v3h-1zM915 795h1v4h-1zM916 799h1v4h-1zM917 803h1v4h-1zM918 807h1v4h-1zM919 811h1v4h-1zM920 815h1v3h-1zM921 818h1v4h-1zM922 822h1v4h-1zM923 826h1v4h-1zM924 830h1v4h-1zM925 834h1v4h-1zM926 838h1v4h-1zM927 842h1v4h-1zM928 846h1v5h-1zM929 851h1v4h-1zM930 855h1v4h-1zM931 859h1v4h-1zM932 863h1v5h-1zM933 868h1v4h-1zM934 872h1v4h-1zM935 876h1v5h-1zM936 881h1v4h-1zM937 885h1v5h-1zM938 890h1v1h-1z" fill="#3ee04c"/>
<rect x="96.5" y="166.5" width="1038" height="726" fill="none" stroke="#d6ffe0" stroke-width="1"/>
<rect x="97.5" y="167.5" width="1036" height="724" fill="none" stroke="#1f7a38" stroke-width="1"/>
</svg>
<div class="t" style="left:99px;top:136px;font-size:24px;line-height:24px;letter-spacing:.07px">FR Magnitude dB V/V (1/1 oct)</div>
<div class="ax" style="right:141px;top:139px;letter-spacing:.05px">Left &nbsp;Avg:0</div>
<div class="ax" style="right:1185px;top:155px">-9.0</div>
<div class="ax" style="right:1185px;top:227px">-10.0</div>
<div class="ax" style="right:1185px;top:300px">-11.0</div>
<div class="ax" style="right:1185px;top:372px">-12.0</div>
<div class="ax" style="right:1185px;top:445px">-13.0</div>
<div class="ax" style="right:1185px;top:517px">-14.0</div>
<div class="ax" style="right:1185px;top:589px">-15.0</div>
<div class="ax" style="right:1185px;top:662px">-16.0</div>
<div class="ax" style="right:1185px;top:734px">-17.0</div>
<div class="ax" style="right:1185px;top:807px">-18.0</div>
<div class="ax" style="right:1185px;top:879px">-19.0</div>

<div class="ax" style="left:47.5px;width:100px;text-align:center;top:903px">20</div>
<div class="ax" style="left:184.9px;width:100px;text-align:center;top:903px">50</div>
<div class="ax" style="left:288.9px;width:100px;text-align:center;top:903px">100</div>
<div class="ax" style="left:392.8px;width:100px;text-align:center;top:903px">200</div>
<div class="ax" style="left:530.3px;width:100px;text-align:center;top:903px">500</div>
<div class="ax" style="left:634.2px;width:100px;text-align:center;top:903px">1k</div>
<div class="ax" style="left:738.2px;width:100px;text-align:center;top:903px">2k</div>
<div class="ax" style="left:875.6px;width:100px;text-align:center;top:903px">5k</div>
<div class="ax" style="left:979.5px;width:100px;text-align:center;top:903px">10k</div>
<div class="ax" style="left:1083.5px;width:100px;text-align:center;top:903px">20k</div>

<div class="ax" style="left:99px;top:933px;letter-spacing:.03px">Cursor: 18309.41 Hz, -31.24 dB</div>
<div class="ax" style="right:140.5px;top:933px;letter-spacing:-.4px">F(Hz)</div>
<div class="t" style="left:1137px;top:168px;font-size:20px;line-height:22px;width:15px;text-align:center;white-space:normal">A<br>R<br>T<br>A</div>
<div class="abs" style="left:1141px;top:837px;width:8px;height:8px;background:#c4c424"></div>
<div class="abs" style="left:1141px;top:864px;width:8px;height:8px;background:#00ff00"></div>
<div class="ax" style="left:1155px;top:829px;letter-spacing:.1px">Over</div>
<div class="ax" style="left:1155px;top:855px;letter-spacing:0">Magn</div>

<div class="abs" style="left:1230px;top:99px;width:1px;height:865px;background:#fff"></div>
<div class="abs" style="left:1231px;top:99px;width:43px;height:1px;background:#a0a0a0"></div>
<div class="abs" style="left:1231px;top:100px;width:43px;height:1px;background:#fbfbfb"></div>
<div class="abs" style="left:1231px;top:963px;width:43px;height:1px;background:#a0a0a0"></div>
<div class="rl" style="left:1223px;top:105px">Top</div>
<div class="spin" style="left:1246px;top:124px;height:32px"><div class="sb" style="top:0"><i class="au"></i></div><div class="sb" style="top:16px"><i class="ad"></i></div></div>
<div class="btn" style="left:1240px;top:168px;width:28px;height:18px;line-height:16px">Fit</div>
<div class="rl" style="left:1224px;top:202px">Range</div>
<div class="spin" style="left:1246px;top:220px;height:32px"><div class="sb" style="top:0"><i class="au"></i></div><div class="sb" style="top:16px"><i class="ad"></i></div></div>
<div class="btn" style="left:1240px;top:269px;width:28px;height:19px;line-height:17px;border-color:#3c7fb1;background:linear-gradient(180deg,#eaf6fd 0,#d9f0fc 45%,#bee6fd 50%,#a7d9f5 100%)">Set</div>
<div class="rl" style="left:1224px;top:305px">FrHigh</div>
<div class="hg" style="left:1240px;top:324px"></div><div class="hb" style="left:1240px;top:324px"><i class="al"></i></div><div class="hb" style="left:1254px;top:324px"><i class="ar"></i></div>
<div class="rl" style="left:1226px;top:350px">FrLow</div>
<div class="hg" style="left:1240px;top:367px"></div><div class="hb" style="left:1240px;top:367px"><i class="al"></i></div><div class="hb" style="left:1254px;top:367px"><i class="ar"></i></div>

<div class="abs" id="sl1"></div><div class="abs" id="sl2"></div>
<div class="abs" id="status"></div>
<span class="st" style="left:1px">Setups graph parameters</span>
<div class="abs" style="left:1172px;top:968px;width:1px;height:15px;background:#d4d2d2"></div>
<div class="abs" style="left:1230px;top:968px;width:1px;height:15px;background:#d4d2d2"></div>
<span class="st" style="left:1122px;letter-spacing:-.55px">L:-16.9</span>
<span class="st" style="left:1180px;letter-spacing:-.55px">R:-16.9</span>
<span class="st" style="left:1236px;letter-spacing:-.7px;font-size:11.5px">dBFS</span>
<div class="abs" style="left:0;top:983px;width:1274px;height:1px;background:#fff"></div>
<div class="abs" style="left:0;top:984px;width:1274px;height:3px;background:linear-gradient(90deg,#4a8ac4,#4680ba 40%,#3c6ca4)"></div>
<div class="abs" style="left:0;top:984px;width:1274px;height:1px;background:#1e3c60"></div>
<div class="abs" style="left:18px;top:985px;width:14px;height:4px;border-radius:7px 7px 0 0;background:#1c3860"></div>
<div class="abs" style="left:244px;top:984px;width:60px;height:4px;border:1px solid #202020;border-radius:3px 3px 0 0;background:#fff"></div>
<div class="abs" style="left:1264px;top:984px;width:10px;height:3px;background:#a8b4c4"></div>


</body></html>
